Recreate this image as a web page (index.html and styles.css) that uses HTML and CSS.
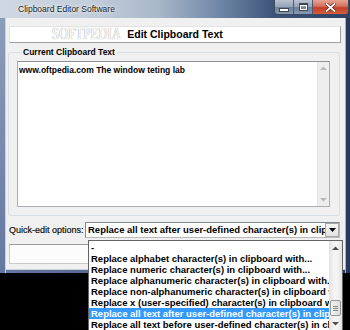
FILE: index.html
```html
<!DOCTYPE html>
<html>
<head>
<meta charset="utf-8">
<title>Clipboard Editor Software</title>
<link rel="stylesheet" href="styles.css">
</head>
<body>
<div class="window">
  <div class="titlebar">
    <span class="title">Clipboard Editor Software</span>
    <div class="caption">
      <span class="cbtn min"><i class="min-glyph"></i></span>
      <span class="cbtn max"><i class="max-glyph"></i></span>
      <span class="cbtn close">
        <svg width="11" height="9" viewBox="0 0 11 9"><path d="M1.5 1 L9.5 8 M9.5 1 L1.5 8" stroke="#5a1a12" stroke-width="3.2" stroke-linecap="square"/><path d="M1.5 1 L9.5 8 M9.5 1 L1.5 8" stroke="#ffffff" stroke-width="1.8" stroke-linecap="square"/></svg>
      </span>
    </div>
  </div>
  <div class="frame-left"></div>
  <div class="client">
    <div class="header">Edit Clipboard Text</div>
    <fieldset class="group">
      <legend class="group-label">Current Clipboard Text</legend>
      <div class="textbox">
        <div class="textbox-text">www.oftpedia.com The window teting lab</div>
        <div class="vscroll">
          <span class="arrow"><svg width="7" height="4" viewBox="0 0 7 4"><path d="M0 4 L3.5 0.5 L7 4 Z" fill="#b8b8b8"/></svg></span>
          <span class="track"></span>
          <span class="arrow"><svg width="7" height="4" viewBox="0 0 7 4"><path d="M0 0 L3.5 3.5 L7 0 Z" fill="#b8b8b8"/></svg></span>
        </div>
      </div>
    </fieldset>
    <div class="quick">
      <span class="quick-label">Quick-edit options:</span>
      <div class="combo">
        <span class="combo-text">Replace all text after user-defined character(s) in clipboard</span>
        <span class="combo-btn"><svg width="7" height="4" viewBox="0 0 7 4"><path d="M0 0 L7 0 L3.5 4 Z" fill="#000"/></svg></span>
      </div>
    </div>
    <div class="lower-box"></div>
  </div>
  <div class="frame-right"></div>
  <div class="frame-bottom"></div>
</div>

<div class="droplist">
  <ul class="items">
    <li>-</li>
    <li>Replace alphabet character(s) in clipboard with...</li>
    <li>Replace numeric character(s) in clipboard with...</li>
    <li>Replace alphanumeric character(s) in clipboard with...</li>
    <li>Replace non-alphanumeric character(s) in clipboard with...</li>
    <li>Replace x (user-specified) character(s) in clipboard with...</li>
    <li class="selected">Replace all text after user-defined character(s) in clipboard</li>
    <li>Replace all text before user-defined character(s) in clipboard</li>
  </ul>
  <div class="dscroll">
    <span class="darrow"><svg width="7" height="4" viewBox="0 0 7 4"><path d="M0 4 L3.5 0.5 L7 4 Z" fill="#4d4d4d"/></svg></span>
    <span class="dtrack"><span class="thumb"><i></i><i></i><i></i></span></span>
    <span class="darrow"><svg width="7" height="4" viewBox="0 0 7 4"><path d="M0 0 L3.5 3.5 L7 0 Z" fill="#4d4d4d"/></svg></span>
  </div>
</div>

<div class="watermark">SOFTPEDIA</div>
</body>
</html>
```

FILE: styles.css
```css
html, body {
  margin: 0;
  padding: 0;
}
body {
  width: 350px;
  height: 330px;
  overflow: hidden;
  background: #000;
  position: relative;
  font-family: "Liberation Sans", Arial, sans-serif;
  color: #000;
}

/* ---------- window frame ---------- */
.window {
  width: 350px;
  height: 273px;
  display: grid;
  grid-template-columns: 6px 339px 5px;
  grid-template-rows: 18px 251px 4px;
  background: linear-gradient(to right, #7d8fae 0%, #5d6f93 40%, #33466b 75%, #22355a 100%);
}
.titlebar {
  grid-column: 1 / 4;
  grid-row: 1;
  display: flex;
  align-items: flex-start;
  background: linear-gradient(to right, #cfd7e2 0%, #c3cedb 25%, #a9b8ca 45%, #7189a8 62%, #3e5579 78%, #2c4165 100%);
}
.title {
  font-size: 8.5px;
  line-height: 18px;
  padding-left: 18px;
  color: #1a1a1a;
  text-shadow: 0 0 5px rgba(255,255,255,0.9), 0 0 2px rgba(255,255,255,0.9);
}
.caption {
  margin-left: auto;
  margin-right: 1px;
  display: flex;
  height: 14px;
  border: 1px solid #3b4a63;
  border-top: none;
  border-radius: 0 0 4px 4px;
  overflow: hidden;
}
.cbtn {
  display: flex;
  align-items: center;
  justify-content: center;
  height: 14px;
  box-sizing: border-box;
}
.min, .max {
  width: 19px;
  background: linear-gradient(to bottom, #b9c3d0 0%, #95a3b6 50%, #6f8098 51%, #8799b0 100%);
  border-right: 1px solid #4d5a70;
}
.min-glyph {
  display: block;
  width: 8px;
  height: 2px;
  margin-top: 5px;
  background: #fff;
  border: 1px solid #3b4656;
}
.max-glyph {
  display: block;
  width: 7px;
  height: 5px;
  border: 1px solid #3b4656;
  box-shadow: inset 0 0 0 1px #fff;
  border-top-width: 2px;
}
.close {
  width: 35px;
  background: linear-gradient(to bottom, #e5a493 0%, #d4705c 45%, #c23f27 55%, #d5603f 100%);
}

.frame-left {
  grid-column: 1;
  grid-row: 2 / 4;
  background: linear-gradient(to bottom, #8c9dba, #6477a0);
  box-shadow: inset -1px 0 0 #c9d3e0;
}
.frame-right {
  grid-column: 3;
  grid-row: 2 / 4;
  background: #263a60;
  box-shadow: inset 1px 0 0 #9fb0c8;
}
.frame-bottom {
  grid-column: 2;
  grid-row: 3;
  background: linear-gradient(to right, #6477a0, #2c4067);
  box-shadow: inset 0 1px 0 #c9d3e0;
}

/* ---------- client area ---------- */
.client {
  grid-column: 2;
  grid-row: 2;
  background: #f0f0f0;
  display: flex;
  flex-direction: column;
}
.header {
  margin: 8px 4px 0 3px;
  height: 17px;
  box-sizing: border-box;
  background: #fff;
  border-top: 1px solid #e3e3e3;
  border-left: 1px solid #e3e3e3;
  border-right: 1px solid #a0a0a0;
  border-bottom: 1px solid #a0a0a0;
  font-weight: bold;
  font-size: 10.5px;
  line-height: 15px;
  text-align: center;
}

.group {
  margin: 4px 5px 0 2px;
  padding: 4px 9px 8px 8px;
  border: 1px solid #d5dfe5;
  border-radius: 3px;
  min-width: 0;
}
.group-label {
  font-weight: bold;
  font-size: 8.5px;
  line-height: 10px;
  padding: 0 2px 0 1px;
  margin-left: 5px;
}
.textbox {
  height: 146px;
  box-sizing: border-box;
  background: #fff;
  border: 1px solid #abadb3;
  border-top-color: #8e9096;
  display: flex;
}
.textbox-text {
  flex: 1;
  font-weight: bold;
  font-size: 8.5px;
  line-height: 10px;
  padding: 3px 0 0 1px;
  white-space: nowrap;
  overflow: hidden;
}
.vscroll {
  width: 11px;
  display: flex;
  flex-direction: column;
  background: #eeeeee;
  border-left: 1px solid #e4e4e4;
}
.arrow {
  height: 12px;
  display: flex;
  align-items: center;
  justify-content: center;
}
.track {
  flex: 1;
}

.quick {
  margin-top: 6px;
  display: flex;
  align-items: center;
  height: 16px;
}
.quick-label {
  width: 79px;
  padding-left: 3px;
  box-sizing: border-box;
  font-size: 9px;
  white-space: nowrap;
  color: #111;
  -webkit-text-stroke: 0.2px #111;
}
.combo {
  width: 255px;
  height: 16px;
  box-sizing: border-box;
  display: flex;
  background: #fff;
  border: 1px solid #828790;
  border-right-color: #b8b8b8;
  border-bottom-color: #b8b8b8;
}
.combo-text {
  flex: 1;
  font-weight: bold;
  font-size: 9.5px;
  line-height: 14px;
  padding-left: 2px;
  white-space: nowrap;
  overflow: hidden;
}
.combo-btn {
  width: 14px;
  box-sizing: border-box;
  border: 1px solid #a8a8a8;
  background: linear-gradient(to bottom, #f6f6f6, #e2e2e2);
  display: flex;
  align-items: center;
  justify-content: center;
}

.lower-box {
  margin: 6px 6px 0 3px;
  height: 20px;
  box-sizing: border-box;
  background: #fcfcfc;
  border: 1px solid #c9c9c9;
  border-top-color: #9a9a9a;
}

/* ---------- drop-down list (popup) ---------- */
.droplist {
  position: absolute;
  left: 88px;
  top: 240px;
  width: 255px;
  height: 91px;
  box-sizing: border-box;
  background: #fff;
  border: 1px solid #646464;
  display: flex;
}
.items {
  flex: 1;
  min-width: 0;
  list-style: none;
  margin: 0;
  padding: 1px 0 0 0;
  overflow: hidden;
}
.items li {
  height: 11px;
  line-height: 11px;
  font-weight: bold;
  font-size: 9.5px;
  padding-left: 2px;
  white-space: nowrap;
  overflow: hidden;
}
.items li.selected {
  background: #3399ff;
  color: #fff;
}
.dscroll {
  width: 13px;
  display: flex;
  flex-direction: column;
  background: linear-gradient(to right, #e3e3e3, #f4f4f4 40%, #f4f4f4 60%, #e3e3e3);
}
.darrow {
  height: 13px;
  display: flex;
  align-items: center;
  justify-content: center;
}
.dtrack {
  flex: 1;
  display: flex;
  flex-direction: column;
  justify-content: flex-end;
  padding-bottom: 1px;
}
.thumb {
  height: 16px;
  margin: 0 1px;
  box-sizing: border-box;
  border: 1px solid #979797;
  border-radius: 2px;
  background: linear-gradient(to right, #f2f2f2, #dcdcdc);
  display: flex;
  flex-direction: column;
  align-items: center;
  justify-content: center;
  gap: 1px;
}
.thumb i {
  display: block;
  width: 5px;
  height: 1px;
  background: #8a8a8a;
}

/* ---------- watermark overlay ---------- */
.watermark {
  position: absolute;
  left: 52px;
  top: 25px;
  font-family: "Liberation Serif", serif;
  font-size: 17px;
  line-height: 17px;
  letter-spacing: 0.5px;
  color: #ffffff;
  text-shadow: 0 0 1px #a8a8a8, 0 0 1px #a8a8a8;
  transform: scaleX(0.72);
  transform-origin: left top;
  pointer-events: none;
}
```
